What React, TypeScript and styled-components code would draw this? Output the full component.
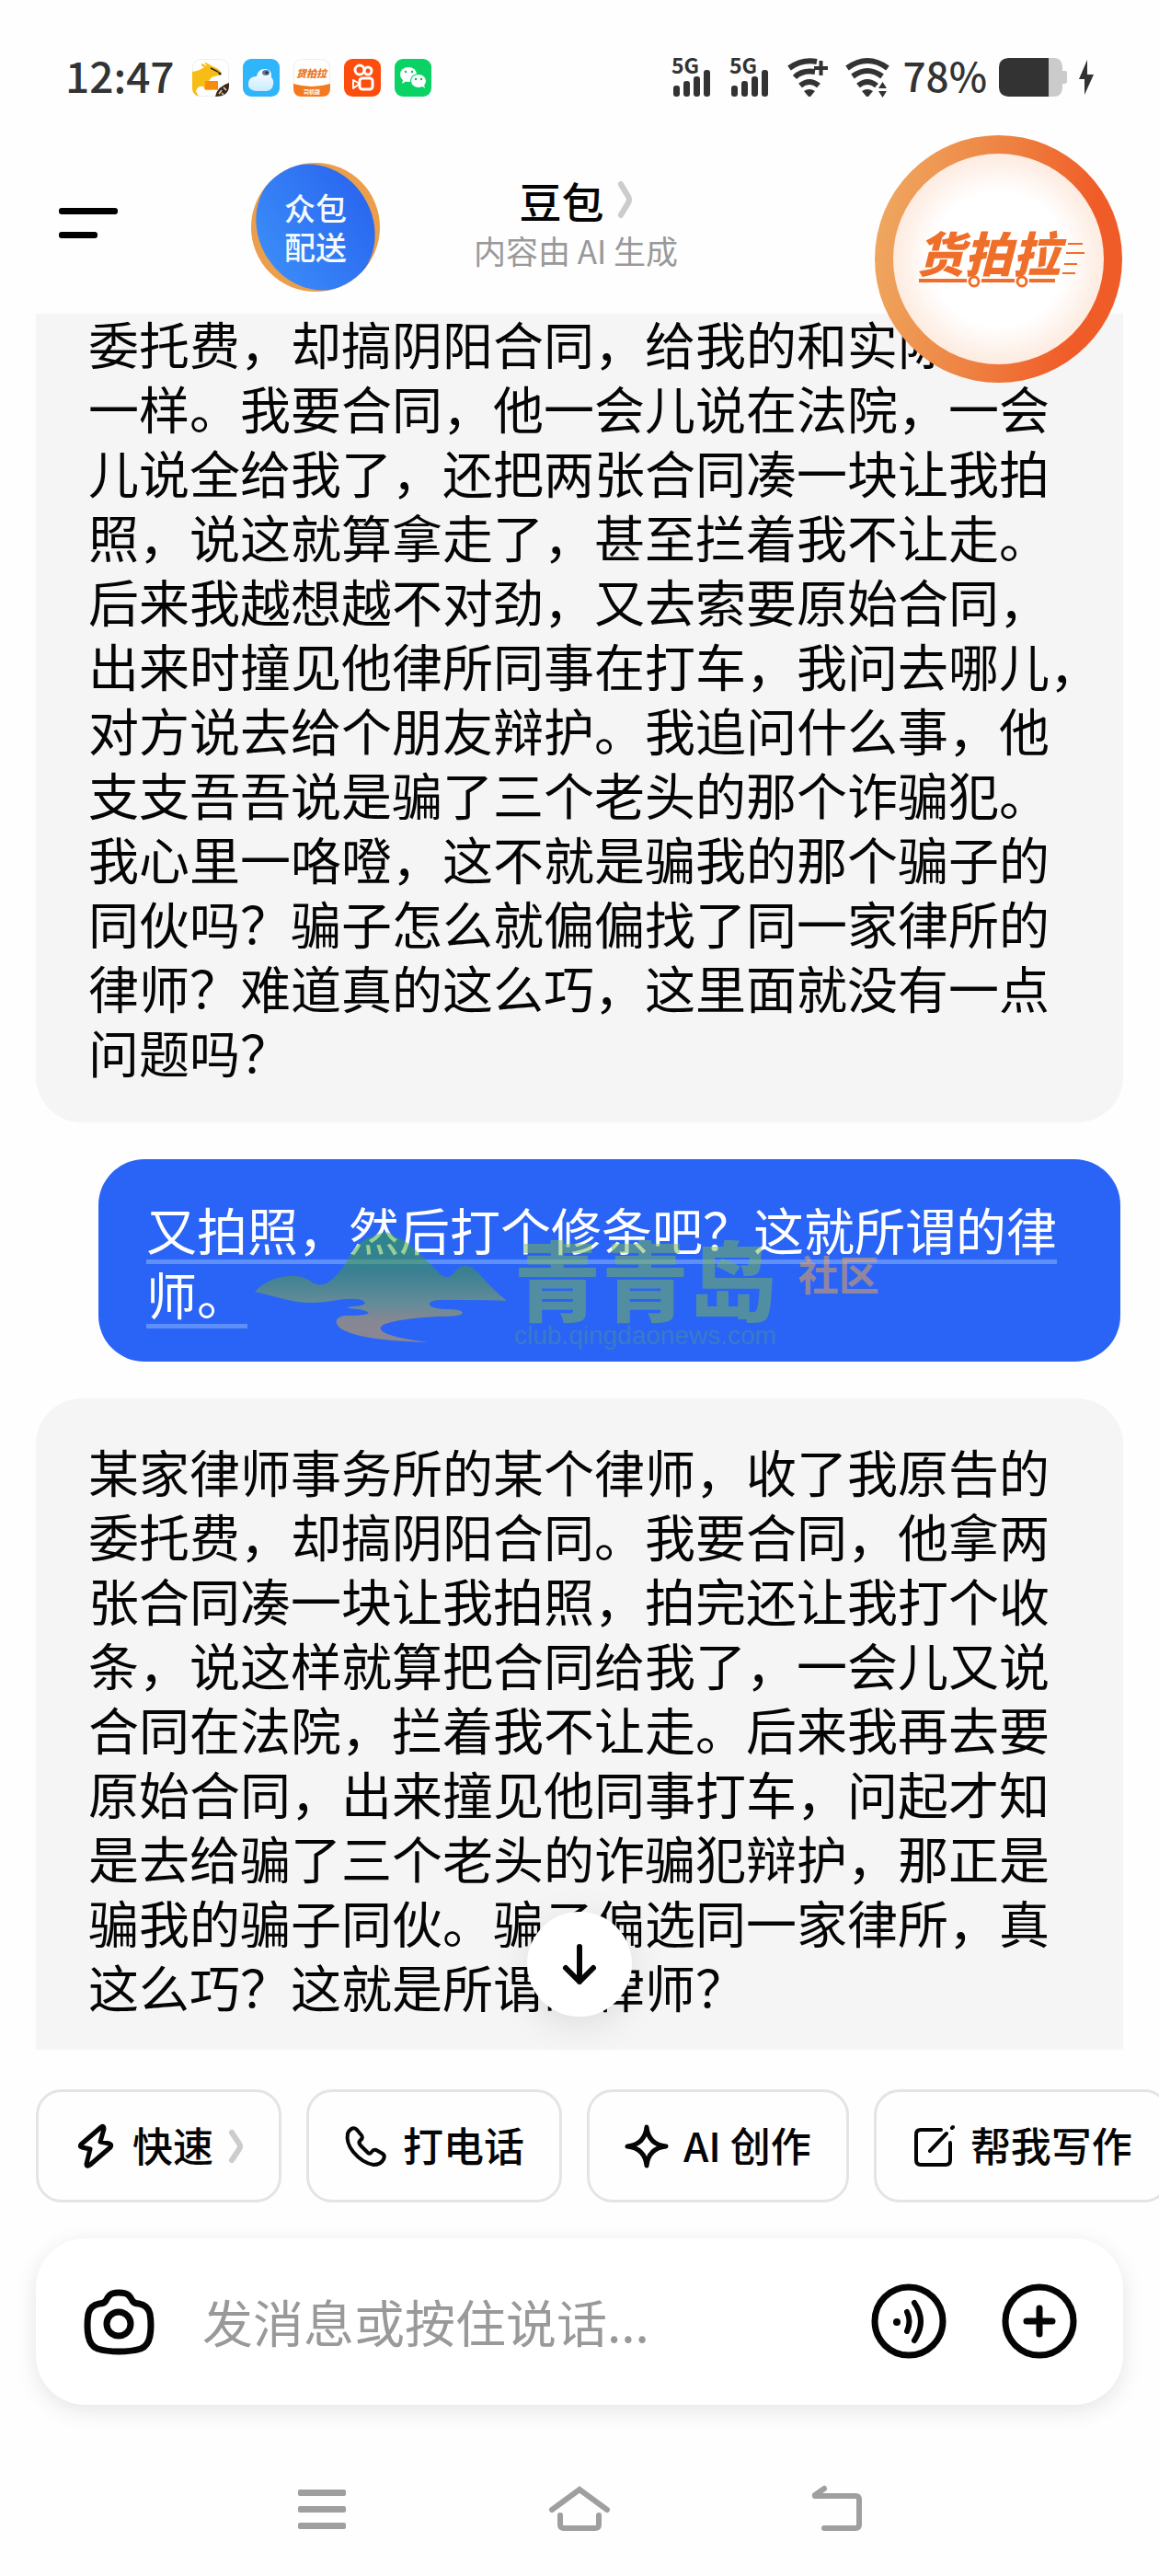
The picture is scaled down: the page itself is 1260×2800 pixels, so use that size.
import React from "react";
import styled, { createGlobalStyle } from "styled-components";

const GlobalStyle = createGlobalStyle`
  * { box-sizing: border-box; }
  body {
    margin: 0;
    background: #fefefe;
    color: #050505;
    font-family: "Noto Sans CJK SC", "Noto Sans", sans-serif;
  }
  button, input { font: inherit; color: inherit; }
  svg { display: block; flex: none; overflow: visible; }
`;

const Screen = styled.div`
  position: relative;
  display: flex;
  flex-direction: column;
  height: 100vh;
  overflow: hidden;
`;

const StatusBar = styled.div`
  flex: none;
  display: flex;
  align-items: center;
  justify-content: space-between;
  height: 168px;
  padding: 0 71px;
  color: #333;
`;

const StatusGroup = styled.div<{ $gap: number }>`
  display: flex;
  align-items: center;
  gap: ${(p) => p.$gap}px;
`;

const Clock = styled.time`
  margin-right: 4px;
  padding-bottom: 6px;
  font-size: 46px;
  line-height: 60px;
  font-weight: 500;
`;

const BatteryLevel = styled.span`
  padding-bottom: 6px;
  font-size: 44px;
  line-height: 60px;
  font-weight: 500;
`;

const Header = styled.header`
  flex: none;
  display: grid;
  grid-template-columns: 1fr auto 1fr;
  align-items: center;
  height: 173px;
  padding: 0 64px 25px;
`;

const PlainButton = styled.button`
  display: flex;
  align-items: center;
  justify-content: center;
  padding: 0;
  border: 0;
  background: none;
  cursor: pointer;
`;

const MenuButton = styled(PlainButton)`
  justify-self: start;
`;

const TitleBlock = styled.div`
  display: flex;
  flex-direction: column;
  align-items: center;
  margin-right: 8px;
`;

const TitleButton = styled(PlainButton)`
  gap: 14px;
`;

const Title = styled.h1`
  margin: 0;
  font-size: 46px;
  line-height: 60px;
  font-weight: 500;
`;

const Subtitle = styled.p`
  margin: 0;
  font-size: 35px;
  line-height: 50px;
  color: #999;
`;

const CourierBadge = styled(PlainButton)`
  position: absolute;
  left: 273px;
  top: 177px;
  width: 140px;
  height: 140px;
  border-radius: 50%;
  overflow: hidden;
  background: #eb9e4c;
`;

const CourierFace = styled.span`
  flex: none;
  display: grid;
  place-content: center;
  width: 142px;
  height: 124px;
  border-radius: 50%;
  transform: rotate(58deg);
  background: linear-gradient(0deg, #3a8af8, #2a68f0);
`;

const CourierText = styled.span`
  width: 72px;
  transform: rotate(-58deg);
  color: #f4fbff;
  font-size: 34px;
  line-height: 42px;
  font-weight: 500;
`;

const CargoBadge = styled(PlainButton)`
  position: absolute;
  right: 40px;
  top: 147px;
  width: 269px;
  height: 269px;
  padding: 20px;
  border-radius: 50%;
  background: linear-gradient(100deg, #efa860 5%, #ee8040 48%, #f05c28 80%);
`;

const CargoFace = styled.span`
  display: grid;
  place-items: center;
  width: 100%;
  height: 100%;
  border-radius: 50%;
  background: radial-gradient(circle, #fff 45%, #fdeade 72%);
`;

const CargoLogo = styled.span`
  position: relative;
  width: 190px;
  height: 70px;
  padding-left: 6px;
  color: #ef6f2a;
  font-size: 52px;
  line-height: 54px;
  font-weight: 900;
  font-style: italic;
  text-align: left;

  svg { position: absolute; inset: 0; }
`;

const Chat = styled.main`
  flex: 1;
  min-height: 0;
  overflow: hidden;
  padding: 0 39px;
`;

const Thread = styled.div`
  display: flex;
  flex-direction: column;
  gap: 40px;
  margin-top: -4px;
`;

const bubblePadding = { start: "0 46px 43px 57px", end: "43px 46px 93px 57px" };
const bubbleRadius = { start: "0 0 50px 50px", end: "50px 50px 0 0" };

const Bubble = styled.p<{ $scrolled: "start" | "end" }>`
  margin: 0;
  padding: ${(p) => bubblePadding[p.$scrolled]};
  border-radius: ${(p) => bubbleRadius[p.$scrolled]};
  background: #f5f5f5;
  font-size: 55px;
  line-height: 70px;
`;

/* Lets the comma hang past the line's right edge by its empty half. */
const HangingMark = styled.span`
  display: inline-block;
  margin-right: -28px;
`;

const SentBubble = styled.div`
  position: relative;
  margin: 0 3px 0 68px;
  padding: 40px 52px;
  border-radius: 50px;
  background: #2a64f6;
  color: #fff;
  font-size: 55px;
  line-height: 70px;
`;

const Marked = styled.span`
  text-decoration: underline 5px #5f90f9;
  text-underline-offset: 10px;
  text-decoration-skip-ink: none;
`;

const Watermark = styled.div`
  position: absolute;
  left: 170px;
  top: 80px;
  display: flex;
  align-items: flex-start;
  opacity: 0.5;
`;

const WatermarkWords = styled.div`
  margin: 2px 0 0 8px;
`;

const WatermarkName = styled.div`
  display: flex;
  justify-content: space-between;
  color: #7ab850;
  font-size: 94px;
  line-height: 92px;
  font-weight: 900;
`;

const WatermarkSite = styled.div`
  color: #4a9098;
  font-family: "Liberation Sans", Arial, sans-serif;
  font-size: 28px;
  line-height: 36px;
`;

const WatermarkTag = styled.div`
  margin: 14px 0 0 24px;
  color: #f5a848;
  font-size: 44px;
  line-height: 60px;
  font-weight: 700;
`;

const ScrollButton = styled(PlainButton)`
  position: absolute;
  left: 50%;
  bottom: calc(100% + 36px);
  width: 114px;
  height: 114px;
  margin-left: -57px;
  border-radius: 50%;
  background: #fff;
  box-shadow: 0 8px 40px rgba(0, 0, 0, 0.1);
`;

const Footer = styled.footer`
  position: relative;
  flex: none;
  padding-top: 43px;
`;

const Chips = styled.div`
  display: flex;
  gap: 27px;
  padding-left: 39px;
  overflow: hidden;
`;

const Chip = styled.button`
  flex: none;
  display: flex;
  align-items: center;
  gap: 16px;
  height: 123px;
  padding: 0 38px;
  border: 3px solid #e4e4e4;
  border-radius: 28px;
  background: #fefefe;
  font-size: 44px;
  line-height: 60px;
  font-weight: 500;
  white-space: nowrap;
  cursor: pointer;
`;

const ChipLabel = styled.span`
  padding-bottom: 4px;
`;

const Composer = styled.form`
  display: flex;
  align-items: center;
  height: 181px;
  margin: 39px 39px 0;
  padding: 0 50px 0 52px;
  border-radius: 54px;
  background: #fff;
  box-shadow: 0 6px 24px rgba(0, 0, 0, 0.1);
`;

const MessageInput = styled.input`
  flex: 1;
  min-width: 0;
  height: 90px;
  margin: 0 50px 0 52px;
  padding: 0 0 4px;
  border: 0;
  outline: 0;
  background: none;
  font-size: 55px;

  &::placeholder { color: #999; opacity: 1; }
`;

const ComposerActions = styled.div`
  display: flex;
  gap: 61px;
`;

const NavBar = styled.nav`
  display: grid;
  grid-template-columns: repeat(3, 1fr);
  height: 146px;
  margin-top: 40px;
  padding: 0 calc(100% / 6);
`;

function Signal() {
  return (
    <svg width="50" height="42" viewBox="0 0 50 42" fill="#333">
      <text x="0" y="17" fontFamily="Noto Sans CJK SC" fontSize="23" fontWeight="700">5G</text>
      <rect x="2" y="30" width="7" height="12" rx="3" />
      <rect x="13" y="25" width="7" height="17" rx="3" />
      <rect x="24" y="20" width="7" height="22" rx="3" />
      <rect x="35" y="13" width="7" height="29" rx="3" />
    </svg>
  );
}

function Wifi({ badge }: { badge: "plus" | "transfer" }) {
  return (
    <svg width="50" height="44" viewBox="0 0 50 44" fill="none" stroke="#333" strokeWidth="6">
      <path d={badge === "plus" ? "M2 12Q16 2 32 5" : "M2 12Q24-4 46 12"} />
      <path d={badge === "plus" ? "M8 22Q16 14 30 16" : "M8 21Q24 9 40 21"} />
      <path d="M14 31Q24 23 34 31" />
      <path d="M18 37Q24 33 30 37L25 43H23Z" fill="#333" stroke="none" />
      {badge === "plus" ? (
        <path d="M29 12H44M36.500 4V20" strokeWidth="4" />
      ) : (
        <path d="M36 34L40.500 27L45 34ZM36 37L40.500 44L45 37Z" fill="#333" stroke="none" />
      )}
    </svg>
  );
}

function Battery() {
  return (
    <svg width="74" height="42" viewBox="0 0 74 42">
      <path d="M54 0H60Q68 0 69 9V14H72Q74 14 74 17V25Q74 28 72 28H69V33Q68 42 60 42H54Z" fill="#cbcbcb" />
      <path d="M54 0H10Q0 1 0 10V32Q0 41 10 42H54Z" fill="#333" />
    </svg>
  );
}

function Charging() {
  return (
    <svg width="16" height="38" viewBox="0 0 16 38" fill="#333">
      <path d="M9 0L0 21H6V38L16 16H9Z" />
    </svg>
  );
}

function KangarooApp() {
  return (
    <svg width="40" height="41" viewBox="0 0 40 41">
      <rect x=".5" y=".5" width="39" height="40" rx="9" fill="#fff" stroke="#eee" />
      <path d="M0 14Q8 13 13 9Q8 7 11 5L16 8L13 3L22 8Q31 11 32 17L21 20L18 24H28V34H14L12 30Q6 29 4 35L7 41Q1 39 0 33Z" fill="#f8bc16" />
      <path d="M14 24H28V33H14Z" fill="#fa8c0c" />
      <path d="M20 10L26 13L29 15" fill="none" stroke="#2a2520" strokeWidth="1.500" />
      <circle cx="30" cy="16" r="1.500" fill="#222" />
      <path d="M40 26Q27 30 25 41Q39 41 40 30Z" fill="#382820" />
      <path d="M29 38L32 34M32 37L34 39M34 31L37 34" stroke="#e8d9a8" strokeWidth="1.500" />
    </svg>
  );
}

function CloudApp() {
  return (
    <svg width="40" height="41" viewBox="0 0 40 41">
      <defs>
        <linearGradient id="cloud" x2="0" y2="1">
          <stop stopColor="#fff" />
          <stop offset="1" stopColor="#c9ebfd" />
        </linearGradient>
      </defs>
      <rect width="40" height="41" rx="9" fill="#2fb5f9" />
      <path d="M14 35Q5 34 6 26Q7 19 15 19Q17 10 25 11Q32 12 31 20Q34 23 33 28Q32 34 26 35Z" fill="url(#cloud)" />
      <ellipse cx="25" cy="15" rx="4" ry="3" fill="#577a9a" />
      <circle cx="26" cy="15" r="1.500" fill="#16324a" />
    </svg>
  );
}

function CargoApp() {
  return (
    <svg width="40" height="41" viewBox="0 0 40 41">
      <rect x=".5" y=".5" width="39" height="40" rx="9" fill="#fff" stroke="#eee" />
      <path d="M0 27Q20 33 40 27V32Q40 41 31 41H9Q0 41 0 32Z" fill="#f47a20" />
      <text x="3" y="20" fill="#e87528" fontFamily="Noto Sans CJK SC" fontSize="11" fontWeight="900" fontStyle="italic">货拍拉</text>
      <text x="11" y="38" fill="#fff" fontFamily="Noto Sans CJK SC" fontSize="6" fontWeight="700">司机版</text>
    </svg>
  );
}

function VideoApp() {
  return (
    <svg width="40" height="41" viewBox="0 0 40 41" fill="none" stroke="#fff" strokeWidth="3">
      <rect width="40" height="41" rx="9" fill="#fd4d0c" stroke="none" />
      <circle cx="17" cy="12" r="5" />
      <circle cx="26" cy="13" r="4" />
      <rect x="17" y="21" width="14" height="12" rx="3" />
      <path d="M17 27L10 23V32Z" strokeWidth="2" strokeLinejoin="round" />
    </svg>
  );
}

function ChatApp() {
  return (
    <svg width="40" height="41" viewBox="0 0 40 41">
      <rect width="40" height="41" rx="9" fill="#0bd265" />
      <path d="M9 23L8 27L13 24Z" fill="#fff" />
      <ellipse cx="15" cy="17" rx="9" ry="8" fill="#fff" />
      <ellipse cx="26" cy="24" rx="9" ry="8" fill="#0bd265" />
      <ellipse cx="26" cy="24" rx="8" ry="7" fill="#fff" />
      <path d="M29 29L33 32L32 28Z" fill="#fff" />
      <g fill="#0ab957">
        <circle cx="12" cy="14" r="1.200" /><circle cx="19" cy="14" r="1.200" />
        <circle cx="23" cy="22" r="1.200" /><circle cx="29" cy="22" r="1.200" />
      </g>
    </svg>
  );
}

function MenuIcon() {
  return (
    <svg width="64" height="34" viewBox="0 0 64 34">
      <rect y="1" width="64" height="7" rx="3" />
      <rect y="27" width="42" height="7" rx="3" />
    </svg>
  );
}

function Chevron({ height }: { height: number }) {
  return (
    <svg width="17" height={height} viewBox="0 0 17 36" preserveAspectRatio="none" fill="none" stroke="#ccc" strokeWidth="6" strokeLinecap="round" strokeLinejoin="round">
      <path d="M4 3L12 15Q14 18 12 21L4 33" />
    </svg>
  );
}

function MountainMark() {
  return (
    <svg width="274" height="120" viewBox="0 0 274 120">
      <defs>
        <linearGradient id="mountain" x2="0" y2="1">
          <stop stopColor="#30a828" />
          <stop offset=".35" stopColor="#489c30" />
          <stop offset=".65" stopColor="#a0b440" />
          <stop offset=".8" stopColor="#e0ac30" />
          <stop offset="1" stopColor="#eca838" />
        </linearGradient>
      </defs>
      <path
        d="M0 64Q14 49 36 47Q50 46 60 52Q68 59 78 55Q88 49 99 33Q112 7 128 4Q145-5 152 4Q163 7 174 18Q185 28 196 39Q207 53 214 46Q218 41 222 38Q232 30 246 47Q259 62 274 74Q250 73 220 73Q190 72 190 77Q189 82 206 83Q225 83 226 87Q225 91 200 91Q145 94 137 102Q132 112 188 119Q110 117 92 103Q83 93 98 90Q127 90 123 86Q118 83 102 82Q98 81 108 80Q124 79 118 74Q112 70 90 73Q60 79 36 73Q20 69 0 64Z"
        fill="url(#mountain)"
      />
    </svg>
  );
}

function Stroke({ size = 48, width = 5, children }: { size?: number; width?: number; children: React.ReactNode }) {
  return (
    <svg width={size} height={size} viewBox={`0 0 ${size} ${size}`} fill="none" stroke="#050505" strokeWidth={width} strokeLinecap="round" strokeLinejoin="round">
      {children}
    </svg>
  );
}

export default function App() {
  return (
    <Screen>
      <GlobalStyle />
      <StatusBar>
        <StatusGroup $gap={15}>
          <Clock>12:47</Clock>
          <KangarooApp />
          <CloudApp />
          <CargoApp />
          <VideoApp />
          <ChatApp />
        </StatusGroup>
        <StatusGroup $gap={13}>
          <Signal />
          <Signal />
          <Wifi badge="plus" />
          <Wifi badge="transfer" />
          <BatteryLevel>78%</BatteryLevel>
          <Battery />
          <Charging />
        </StatusGroup>
      </StatusBar>

      <Header>
        <MenuButton aria-label="菜单">
          <MenuIcon />
        </MenuButton>
        <TitleBlock>
          <TitleButton>
            <Title>豆包</Title>
            <Chevron height={40} />
          </TitleButton>
          <Subtitle>内容由 AI 生成</Subtitle>
        </TitleBlock>
      </Header>

      <Chat>
        <Thread>
          <Bubble $scrolled="start">
            委托费，却搞阴阳合同，给我的和实际的不一样。我要合同，他一会儿说在法院，一会儿说全给我了，还把两张合同凑一块让我拍照，说这就算拿走了，甚至拦着我不让走。后来我越想越不对劲，又去索要原始合同，出来时撞见他律所同事在打车，我问去哪<HangingMark>儿，</HangingMark>对方说去给个朋友辩护。我追问什么事，他支支吾吾说是骗了三个老头的那个诈骗犯。我心里一咯噔，这不就是骗我的那个骗子的同伙吗？骗子怎么就偏偏找了同一家律所的律师？难道真的这么巧，这里面就没有一点问题吗？
          </Bubble>
          <SentBubble>
            <Marked>又拍照，然后打个修条吧？这就所谓的律师。</Marked>
            <Watermark>
              <MountainMark />
              <WatermarkWords>
                <WatermarkName>
                  <span>青</span>
                  <span>青</span>
                  <span>岛</span>
                </WatermarkName>
                <WatermarkSite>club.qingdaonews.com</WatermarkSite>
              </WatermarkWords>
              <WatermarkTag>社区</WatermarkTag>
            </Watermark>
          </SentBubble>
          <Bubble $scrolled="end">
            某家律师事务所的某个律师，收了我原告的委托费，却搞阴阳合同。我要合同，他拿两张合同凑一块让我拍照，拍完还让我打个收条，说这样就算把合同给我了，一会儿又说合同在法院，拦着我不让走。后来我再去要原始合同，出来撞见他同事打车，问起才知是去给骗了三个老头的诈骗犯辩护，那正是骗我的骗子同伙。骗子偏选同一家律所，真这么巧？这就是所谓的律师？
          </Bubble>
        </Thread>
      </Chat>

      <Footer>
        <ScrollButton aria-label="回到底部">
          <Stroke size={48} width={6}>
            <path d="M24 5V43M9 28L24 43L39 28" />
          </Stroke>
        </ScrollButton>
        <Chips>
          <Chip>
            <Stroke>
              <path d="M30 3L8 22Q6 24 9 25L18 27L14 43Q14 47 18 44L40 25Q42 22 39 21L29 19L33 5Q33 1 30 3Z" />
            </Stroke>
            <ChipLabel>快速</ChipLabel>
            <Chevron height={36} />
          </Chip>
          <Chip>
            <Stroke width={4}>
              <path d="M8 5Q11 3 14 6L19 12Q21 15 18 17Q15 20 18 23L26 31Q28 33 30 30Q32 27 35 28L42 32Q45 34 43 38Q40 44 32 44Q20 42 10 30Q2 20 4 10Q5 7 8 5Z" />
            </Stroke>
            <ChipLabel>打电话</ChipLabel>
          </Chip>
          <Chip>
            <Stroke>
              <path d="M24 3Q26 22 45 24Q26 26 24 45Q22 26 3 24Q22 22 24 3Z" />
            </Stroke>
            <ChipLabel>AI 创作</ChipLabel>
          </Chip>
          <Chip>
            <Stroke width={4}>
              <path d="M32 6H10Q5 6 5 11V39Q5 44 10 44H37Q42 44 42 39V20M20 29L38 10M44 4L45 3" />
            </Stroke>
            <ChipLabel>帮我写作</ChipLabel>
          </Chip>
        </Chips>
        <Composer onSubmit={(e) => e.preventDefault()}>
          <PlainButton type="button" aria-label="拍照">
            <svg width="77" height="72" viewBox="0 0 77 72" fill="none" stroke="#050505" strokeWidth="7">
              <path d="M38 4Q46 4 49 7Q51 9 53 13Q55 16 60 16Q70 18 72 27Q74 40 72 51Q70 62 62 65Q52 68 38 68Q25 68 15 65Q7 62 5 51Q3 40 5 27Q7 18 17 16Q22 16 24 13Q26 9 28 7Q31 4 38 4Z" />
              <circle cx="38" cy="38" r="13" />
            </svg>
          </PlainButton>
          <MessageInput aria-label="发消息" placeholder="发消息或按住说话..." />
          <ComposerActions>
            <PlainButton type="button" aria-label="语音">
              <Stroke size={81} width={7}>
                <circle cx="40" cy="40" r="37" />
                <path d="M38 30Q43 40 38 51M46 20Q60 40 46 61" strokeWidth="6" />
                <circle cx="27" cy="41" r="4" fill="#050505" stroke="none" />
              </Stroke>
            </PlainButton>
            <PlainButton type="button" aria-label="更多">
              <Stroke size={81} width={7}>
                <circle cx="40" cy="40" r="37" />
                <path d="M40 26V54M26 40H54" />
              </Stroke>
            </PlainButton>
          </ComposerActions>
        </Composer>
        <NavBar>
          <PlainButton aria-label="最近任务">
            <svg width="52" height="43" viewBox="0 0 52 43" fill="#9f9f9f">
              <rect width="52" height="7" rx="2" />
              <rect y="18" width="52" height="7" rx="2" />
              <rect y="36" width="52" height="7" rx="2" />
            </svg>
          </PlainButton>
          <PlainButton aria-label="主屏幕">
            <svg width="68" height="50" viewBox="0 0 68 50" fill="none" stroke="#9f9f9f" strokeWidth="6" strokeLinecap="round">
              <path d="M4 26L34 4L64 26" />
              <path d="M13 32V42Q13 46 17 46H51Q55 46 55 42V32" />
            </svg>
          </PlainButton>
          <PlainButton aria-label="返回">
            <svg width="56" height="50" viewBox="0 0 56 50" fill="none" stroke="#9f9f9f" strokeWidth="6" strokeLinecap="round">
              <path d="M4 11H48Q52 11 52 15V42Q52 46 48 46H14" />
              <path d="M4 10L14 3" />
            </svg>
          </PlainButton>
        </NavBar>
      </Footer>

      <CourierBadge aria-label="众包配送">
        <CourierFace>
          <CourierText>众包配送</CourierText>
        </CourierFace>
      </CourierBadge>
      <CargoBadge aria-label="货拍拉">
        <CargoFace>
          <CargoLogo>
            货拍拉
            <svg width="190" height="70" viewBox="0 0 190 70" fill="none" stroke="#ef6f2a" strokeWidth="3">
              <path d="M8 58H60M76 58H112M128 58H156" strokeWidth="4" />
              <circle cx="68" cy="59" r="5" fill="#fff" />
              <circle cx="120" cy="59" r="5" fill="#fff" />
              <path d="M170 18H186M168 28H188M166 40H180M164 50H178" strokeWidth="2" />
            </svg>
          </CargoLogo>
        </CargoFace>
      </CargoBadge>
    </Screen>
  );
}
